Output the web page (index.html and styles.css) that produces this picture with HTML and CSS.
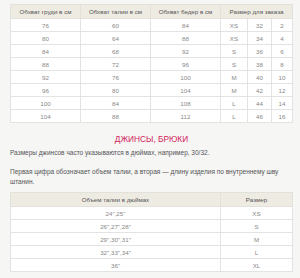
FILE: index.html
```
<!DOCTYPE html>
<html lang="ru">
<head>
<meta charset="utf-8">
<link rel="stylesheet" href="styles.css">
</head>
<body>
<div class="page">
  <table class="sizes">
    <colgroup>
      <col class="c-w70"><col class="c-w70"><col class="c-w70"><col class="c-w27"><col class="c-w24"><col>
    </colgroup>
    <thead>
      <tr><th>Обхват груди в см</th><th>Обхват талии в см</th><th>Обхват бедер в см</th><th colspan="3">Размер для заказа</th></tr>
    </thead>
    <tbody>
      <tr><td>76</td><td>60</td><td>84</td><td>XS</td><td>32</td><td>2</td></tr>
      <tr><td>80</td><td>64</td><td>88</td><td>XS</td><td>34</td><td>4</td></tr>
      <tr><td>84</td><td>68</td><td>92</td><td>S</td><td>36</td><td>6</td></tr>
      <tr><td>88</td><td>72</td><td>96</td><td>S</td><td>38</td><td>8</td></tr>
      <tr><td>92</td><td>76</td><td>100</td><td>M</td><td>40</td><td>10</td></tr>
      <tr><td>96</td><td>80</td><td>104</td><td>M</td><td>42</td><td>12</td></tr>
      <tr><td>100</td><td>84</td><td>108</td><td>L</td><td>44</td><td>14</td></tr>
      <tr><td>104</td><td>88</td><td>112</td><td>L</td><td>46</td><td>16</td></tr>
    </tbody>
  </table>

  <h2 class="title">ДЖИНСЫ, БРЮКИ</h2>
  <p class="text">Размеры джинсов часто указываются в дюймах, например, 30/32.</p>
  <p class="text">Первая цифра обозначает объем талии, а вторая — длину изделия по внутреннему шву штанин.</p>

  <table class="sizes jeans">
    <colgroup><col class="c-w210"><col></colgroup>
    <thead>
      <tr><th>Объем талии в дюймах</th><th>Размер</th></tr>
    </thead>
    <tbody>
      <tr><td>24",25"</td><td>XS</td></tr>
      <tr><td>26",27",28"</td><td>S</td></tr>
      <tr><td>29",30",31"</td><td>M</td></tr>
      <tr><td>32",33",34"</td><td>L</td></tr>
      <tr><td>36"</td><td>XL</td></tr>
    </tbody>
  </table>
</div>
</body>
</html>
```
FILE: styles.css
```
html, body {
  margin: 0;
  padding: 0;
  background: #f6f6f5;
}
.page {
  padding: 4px 7px 0 10px;
  font-family: "Liberation Sans", Arial, sans-serif;
  color: #666;
}
.sizes {
  width: 283px;
  border-collapse: collapse;
  table-layout: fixed;
  background: #fff;
  font-size: 6.2px;
}
.c-w70 { width: 70px; }
.c-w27 { width: 27px; }
.c-w24 { width: 24px; }
.c-w210 { width: 210px; }
.sizes th {
  background: #eeebe3;
  color: #555;
  font-weight: normal;
  height: 13px;
  padding: 0;
  border: 1px solid #e3e1dc;
  text-align: center;
}
.sizes td {
  height: 12px;
  padding: 0;
  border: 1px solid #e3e3e3;
  text-align: center;
  color: #888;
}
.title {
  margin: 10px 0 0;
  text-align: center;
  font-weight: normal;
  font-size: 8.3px;
  color: #d4235b;
  line-height: 12px;
}
.text {
  margin: 3px 0 0;
  font-size: 6.5px;
  line-height: 10px;
  color: #555;
  padding-right: 8px;
}
.text + .text {
  margin-top: 9px;
}
.jeans {
  margin-top: 5px;
}
```
